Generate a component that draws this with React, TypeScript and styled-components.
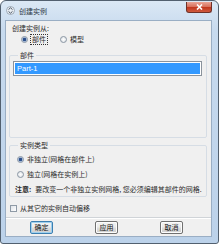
import React from "react";
import styled, { createGlobalStyle } from "styled-components";

const Global = createGlobalStyle`
  html, body { margin: 0; padding: 0; background: #ffffff; }
  body { font-family: "Noto Sans CJK SC", "Noto Sans", sans-serif; }
`;

const Frame = styled.div`
  width: 219px;
  height: 244px;
  box-sizing: border-box;
  border: 1px solid #52606f;
  border-radius: 6px 6px 3px 3px;
  background: linear-gradient(180deg, #dbe8f5 0%, #c7daee 12%, #bcd2ea 100%);
  display: flex;
  flex-direction: column;
  padding: 0 6px 6px 4px;
`;

const TitleBar = styled.div`
  height: 19px;
  display: flex;
  align-items: center;
  gap: 4px;
  padding-left: 1px;
`;

const TitleText = styled.span`
  font-size: 7px;
  color: #2a3644;
  flex: 1;
`;

const CloseBtn = styled.div`
  width: 26px;
  height: 11px;
  margin-top: -6px;
  box-sizing: border-box;
  border: 1px solid #6e3128;
  border-top: none;
  border-radius: 0 0 3px 3px;
  background: linear-gradient(180deg, #e9a597 0%, #d9735f 45%, #c2381f 55%, #cf5a3e 100%);
  display: flex;
  align-items: center;
  justify-content: center;
`;

const Client = styled.div`
  flex: 1;
  background: #f0f0f0;
  border: 1px solid #9aaec4;
  display: flex;
  flex-direction: column;
  font-size: 7px;
  color: #2b2b2b;
  padding: 2px 4px 0 2px;
`;

const Label = styled.div`
  height: 10px;
  line-height: 10px;
  padding-left: 4px;
`;

const RadioRow = styled.div<{ $indent: number }>`
  display: flex;
  align-items: center;
  gap: 13px;
  height: 12px;
  padding-left: ${(p) => p.$indent}px;
`;

const Choice = styled.label`
  display: flex;
  align-items: center;
  gap: 3px;
`;

const Dot = styled.span<{ $on?: boolean }>`
  width: 7px;
  height: 7px;
  box-sizing: border-box;
  border-radius: 50%;
  border: 1px solid #8a96a3;
  background: ${(p) =>
    p.$on
      ? "radial-gradient(circle, #2c4f8a 0 1.4px, #9fb6d8 1.6px 2.2px, #f4f4f4 2.4px)"
      : "radial-gradient(circle, #ffffff, #d9dde2)"};
`;

const Focus = styled.span`
  outline: 1px dotted #333;
  padding: 0 1px;
  line-height: 9px;
`;

const Group = styled.fieldset<{ $h: number }>`
  margin: 0 0 0 1px;
  padding: 0 4px 0 3px;
  border: 1px solid #d6dde5;
  border-radius: 2px;
  height: ${(p) => p.$h}px;
  box-sizing: border-box;
  min-width: 0;
  display: flex;
  flex-direction: column;
  legend {
    padding: 0 2px;
    margin-left: 5px;
    line-height: 8px;
  }
`;

const ListBox = styled.div`
  flex: 1;
  margin-top: 2px;
  margin-bottom: 2px;
  background: #ffffff;
  border: 1px solid #8b939c;
  padding: 1px;
`;

const ListItem = styled.div<{ $sel?: boolean }>`
  height: 11px;
  line-height: 11px;
  padding-left: 2px;
  font-family: "Liberation Sans", sans-serif;
  font-size: 7.5px;
  background: ${(p) => (p.$sel ? "#3399ff" : "transparent")};
  color: ${(p) => (p.$sel ? "#ffffff" : "#000")};
`;

const Note = styled.div`
  margin-top: 4px;
  padding-left: 2px;
  line-height: 10px;
  white-space: nowrap;
  b { font-weight: bold; margin-right: 4px; }
`;

const CheckRow = styled.label`
  display: flex;
  align-items: center;
  gap: 3px;
  height: 12px;
  margin-top: 5px;
  padding-left: 2px;
`;

const Box = styled.span`
  width: 7px;
  height: 7px;
  box-sizing: border-box;
  border: 1px solid #8f9aa6;
  background: linear-gradient(135deg, #dfe3e8, #ffffff);
`;

const Separator = styled.div`
  height: 0;
  border-top: 1px solid #d0d4d8;
  border-bottom: 1px solid #ffffff;
  margin: 3px -4px 0 -2px;
`;

const ButtonBar = styled.div`
  display: flex;
  justify-content: space-between;
  padding: 2px 24px 0 22px;
`;

const Button = styled.button<{ $default?: boolean }>`
  width: 23px;
  height: 13px;
  padding: 0;
  font-family: inherit;
  font-size: 7px;
  color: #111;
  border: 1px solid ${(p) => (p.$default ? "#3c7fb1" : "#707070")};
  border-radius: 2px;
  background: linear-gradient(180deg, #f2f2f2 0%, #ebebeb 48%, #dddddd 52%, #cfcfcf 100%);
  box-shadow: ${(p) => (p.$default ? "inset 0 0 0 1px #9fd0ee" : "inset 0 0 0 1px #fcfcfc")};
  line-height: 11px;
`;

const TitleIcon = () => (
  <svg width="9" height="9" viewBox="0 0 9 9">
    <circle cx="4.5" cy="4.5" r="4" fill="#e9eef3" stroke="#8e9aa8" strokeWidth="0.8" />
    <path d="M2.5 3.6 L4.5 1.8 L6.5 3.6 M2.5 5.4 L4.5 7.2 L6.5 5.4" fill="none" stroke="#4a5665" strokeWidth="1" />
  </svg>
);

export default function App() {
  return (
    <>
      <Global />
      <Frame>
        <TitleBar>
          <TitleIcon />
          <TitleText>创建实例</TitleText>
          <CloseBtn>
            <svg width="7" height="6" viewBox="0 0 7 6">
              <path d="M1 0.5 L6 5.5 M6 0.5 L1 5.5" stroke="#ffffff" strokeWidth="1.6" />
            </svg>
          </CloseBtn>
        </TitleBar>
        <Client>
          <Label>创建实例从:</Label>
          <RadioRow $indent={13}>
            <Choice>
              <Dot $on />
              <Focus>部件</Focus>
            </Choice>
            <Choice>
              <Dot />
              <span>模型</span>
            </Choice>
          </RadioRow>
          <Group $h={87} style={{ marginTop: 6 }}>
            <legend>部件</legend>
            <ListBox>
              <ListItem $sel>Part-1</ListItem>
            </ListBox>
          </Group>
          <Group $h={56} style={{ marginTop: 3 }}>
            <legend>实例类型</legend>
            <RadioRow $indent={4} style={{ marginTop: 4 }}>
              <Choice>
                <Dot $on />
                <span>非独立(网格在部件上)</span>
              </Choice>
            </RadioRow>
            <RadioRow $indent={4} style={{ marginTop: 3 }}>
              <Choice>
                <Dot />
                <span>独立(网格在实例上)</span>
              </Choice>
            </RadioRow>
            <Note>
              <b>注意:</b>要改变一个非独立实例网格, 您必须编辑其部件的网格.
            </Note>
          </Group>
          <CheckRow>
            <Box />
            <span>从其它的实例自动偏移</span>
          </CheckRow>
          <Separator />
          <ButtonBar>
            <Button $default>确定</Button>
            <Button>应用</Button>
            <Button>取消</Button>
          </ButtonBar>
        </Client>
      </Frame>
    </>
  );
}
